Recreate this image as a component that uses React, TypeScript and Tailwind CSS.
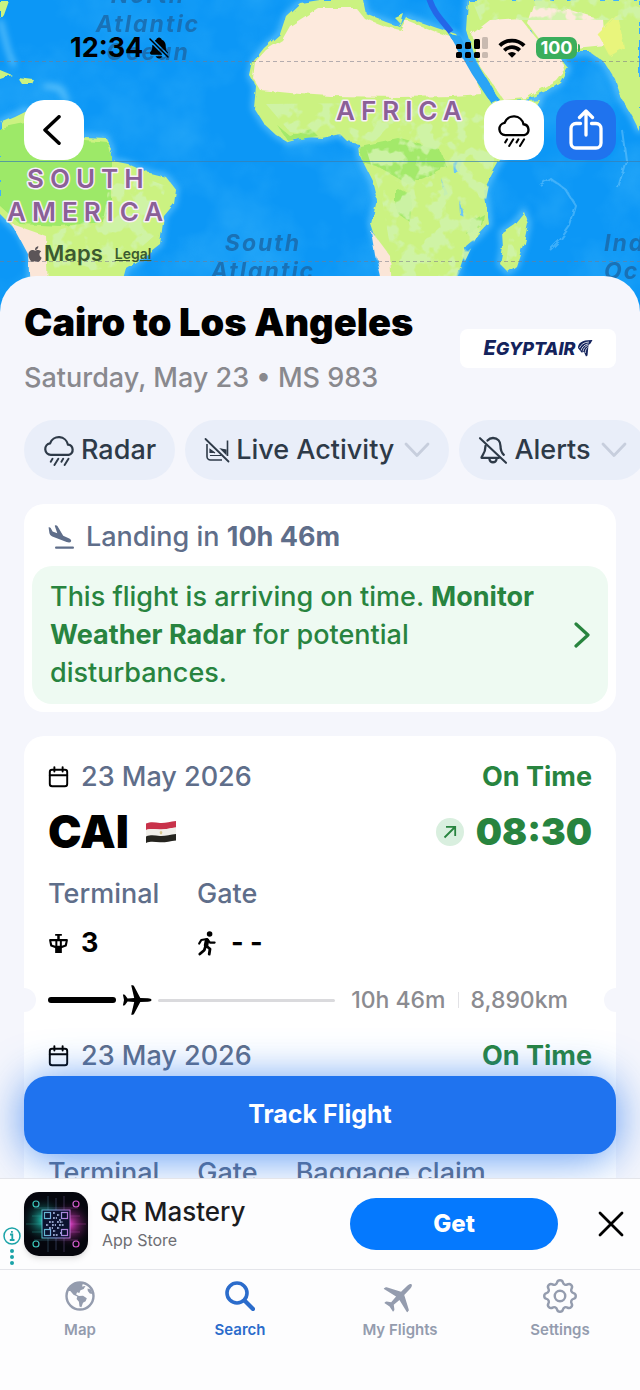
import type { FC, ReactNode } from "react";
import { FaApple } from "react-icons/fa";
import { IoNotificationsOff } from "react-icons/io5";
import { TbSettings } from "react-icons/tb";

interface IconProps {
  className?: string;
}

const RainIcon: FC<IconProps> = ({ className }) => (
  <svg
    viewBox="0 1 33 33"
    fill="none"
    stroke="currentColor"
    strokeWidth="2.3"
    strokeLinecap="round"
    className={className}
  >
    <path d="M8 22.500a6 6 0 0 1-.7-11.900 9.600 9.600 0 0 1 18.400 1.300 5.400 5.400 0 0 1 .8 10.600Z" />
    <path d="M9.800 26.500 8 29.500M15.800 26.500l-4 6.500M20.800 26.500l-1.800 3M26.300 26.500l-4 6.500" strokeWidth="2" />
  </svg>
);

const LiveActivityOffIcon: FC<IconProps> = ({ className }) => (
  <svg viewBox="0 0 26 26" fill="none" stroke="currentColor" className={className}>
    <path d="M3 7v12.500A3.500 3.500 0 0 0 6.500 23H18M23.500 3.500V19" strokeWidth="1.600" />
    <path d="M6 18.500h11M6 16v-3.500l5 3.500M17 12l5 1v4z" fill="currentColor" strokeWidth="1.200" />
    <path d="M1.500 2 24.500 24.500" strokeWidth="1.800" strokeLinecap="round" />
  </svg>
);

const BellOffIcon: FC<IconProps> = ({ className }) => (
  <svg
    viewBox="0 0 30 30"
    fill="none"
    stroke="currentColor"
    strokeWidth="2.300"
    strokeLinecap="round"
    strokeLinejoin="round"
    className={className}
  >
    <path d="M9.500 5.600C11 3.800 12.600 3 15 3c4.600 0 7.500 3.400 7.500 8 0 4.500 1.200 6.800 3.300 8.800M21 22.800H3.500C3.500 20.500 7.500 19 7.500 11" />
    <path d="M11.500 24.500a3.600 3.600 0 0 0 7 0" />
    <path d="M2 3.200 28 27.800" strokeWidth="2.100" />
  </svg>
);

const LandingIcon: FC<IconProps> = ({ className }) => (
  <svg viewBox="0 0 26 25" fill="currentColor" className={className}>
    <path d="M.6 2.600C.6 1.900 2.200 2.200 2.700 2.900L4.600 6.400 9.300 8.300 6.800 1C6.600.2 8.600 0 9.400 1.100L15.200 10.800 20.700 13.200C23 14.300 23.600 15.500 23 16.500 22.400 17.500 20.800 17.700 18.600 16.900L4.300 11.400C2.600 10.700 1.700 9.600 1.400 8.100Z" />
    <rect x="7" y="21.600" width="19" height="2.200" rx="1.100" />
  </svg>
);

const AirplaneIcon: FC<IconProps> = ({ className }) => (
  <svg viewBox="0 0 30 30" fill="currentColor" className={className}>
    <path d="M29.500 15c0 1-1.600 1.700-3.600 1.800l-7.600.2-6.200 11.800c-.3.600-.8.900-1.500.9H9.200l3-12.600-6.600-.5-2.400 3.200c-.3.400-.7.600-1.200.6H.9L2 15 .9 9.600H2c.5 0 .9.200 1.200.6l2.400 3.200 6.600-.5L9.200.3h1.400c.7 0 1.200.3 1.500.9L18.300 13l7.600.2c2 .1 3.600.8 3.600 1.800Z" />
  </svg>
);

const WalkIcon: FC<IconProps> = ({ className }) => (
  <svg
    viewBox="0 0 20 25"
    fill="none"
    stroke="currentColor"
    strokeLinecap="round"
    strokeLinejoin="round"
    className={className}
  >
    <circle cx="12.600" cy="3" r="2.800" fill="currentColor" stroke="none" />
    <path d="M10 9.500 9 14.500" strokeWidth="4.500" />
    <path d="M2.200 12.500 4.300 9 10 8l3 3.600h4.600" strokeWidth="2.200" />
    <path d="m9.500 15 3.500 3-.8 5.200M8.500 15.500l-1.300 3.700L2.800 23" strokeWidth="2.800" />
  </svg>
);

const CalendarIcon: FC<IconProps> = ({ className }) => (
  <svg
    viewBox="0 0 22 24"
    fill="none"
    stroke="currentColor"
    strokeWidth="2.100"
    strokeLinecap="round"
    className={className}
  >
    <rect x="1.500" y="4" width="19" height="18" rx="2.500" />
    <path d="M1.500 10h19M6.500 1.200V6M15.500 1.200V6" />
  </svg>
);

const TowerIcon: FC<IconProps> = ({ className }) => (
  <svg viewBox="0 0 22 22" fill="currentColor" className={className}>
    <path d="M7.500 1h7v1.800H12.300v3.400h-2.600V2.800H7.500zM7.500 14.500h7V21h-7z" />
    <path
      d="M2.500 6.300h17c1 0 1.500.6 1.300 1.500l-1 5.200c-.2.800-.7 1.200-1.500 1.400l-4.300 1.600H8l-4.300-1.600c-.8-.2-1.300-.6-1.500-1.400l-1-5.200c-.2-.9.300-1.500 1.300-1.500zm1 2.300.9 3.700 3.300 1V8.600zm6.300 0v4.700h2.600V8.600zm4.700 0v4.700l3.100-1 .9-3.700z"
      fillRule="evenodd"
    />
  </svg>
);

const EgyptFlag: FC<IconProps> = ({ className }) => (
  <svg viewBox="0 0 32 24" className={className}>
    <path d="M1 3.500c5-2 9-1 14-.6s10-1.400 16-1.900v6.600c-6 .6-11 2.200-16 1.900s-9-1.400-14 .6z" fill="#c8324a" />
    <path d="M1 10.100c5-2 9-.9 14-.6s10-1.300 16-1.900v6.400c-6 .6-11 2.200-16 1.900s-9-1.400-14 .6z" fill="#f1efea" />
    <path d="M1 16.500c5-2 9-.9 14-.6s10-1.300 16-1.900v6.400c-6 .6-11 2.200-16 1.900s-9-1.400-14 .6z" fill="#25241f" />
    <path d="m16 10.800 1.400 1.200-.5 2.200h-1.800l-.5-2.200z" fill="#d8c78f" />
  </svg>
);

const WorldMap: FC = () => (
  <svg
    viewBox="0 0 640 320"
    preserveAspectRatio="xMidYMin slice"
    className="absolute inset-x-0 top-0 h-80 w-full"
    fontFamily="Inter, sans-serif"
  >
    <defs>
      <filter id="coast" x="-5%" y="-5%" width="110%" height="110%">
        <feTurbulence type="fractalNoise" baseFrequency="0.09" numOctaves="2" seed="4" />
        <feDisplacementMap in="SourceGraphic" scale="6" />
      </filter>
      <filter id="shelf" x="-5%" y="-5%" width="110%" height="110%">
        <feGaussianBlur stdDeviation="3" />
      </filter>
      <filter id="depth">
        <feTurbulence type="fractalNoise" baseFrequency="0.014" numOctaves="4" seed="9" />
        <feColorMatrix values="0 0 0 0 0.2  0 0 0 0 0.72  0 0 0 0 1  1.8 0 0 0 -0.75" />
      </filter>
      <filter id="forest">
        <feTurbulence type="fractalNoise" baseFrequency="0.06" numOctaves="3" seed="2" />
        <feColorMatrix values="0 0 0 0 0.63  0 0 0 0 0.9  0 0 0 0 0.4  9 0 0 0 -4.4" />
        <feComposite in2="SourceAlpha" operator="in" />
      </filter>
      <path
        id="africa"
        d="M300 3 286 16 280 34 264 48 253 62 250 76 256 86 254 108 264 124 276 135 288 142 306 137 322 138 340 134 348 142 359 144 360 156 372 180 377 200 371 224 378 246 383 262 386 290H452L458 270 466 246 478 236 489 224 484 190 492 174 508 146 530 120 540 100 498 104 486 82 470 58 456 34 437 28 420 22 406 17 400 27 386 22 366 14 363 0H320Z"
      />
      <path
        id="arabia"
        d="M468 0 466 30 474 56 488 84 500 102 526 100 546 91 560 82 568 68 560 58 546 54 530 50 520 32 531 30 538 46 566 52 590 52 604 62 614 78 620 96 632 116 640 132V0Z"
      />
      <path
        id="america"
        d="M0 122 14 116 26 110 50 120 84 137 106 138 112 150 108 160 128 164 146 172 166 177 176 190 174 204 164 216 160 244 142 258 126 268 120 290H30L30 254 20 234 0 214Z"
      />
      <path id="madagascar" d="M524 212 528 224 524 242 516 266 508 272 500 264 503 248 502 232 514 224Z" />
    </defs>

    <rect width="640" height="320" fill="#0c97f6" />
    <rect width="640" height="320" filter="url(#depth)" opacity="0.25" />
    <g filter="url(#shelf)" fill="none" stroke="#8fdcff" strokeWidth="5" opacity="0.6">
      <use href="#africa" />
      <use href="#arabia" />
      <use href="#america" />
      <use href="#madagascar" />
      <path d="M0 20 8 50 14 66M44 86 60 88 68 102" />
    </g>
    <g fill="none" stroke="#8ad4ff" strokeWidth="2" opacity="0.4" filter="url(#coast)">
      <path d="M540 185 550 178 566 190 576 206 570 226 560 240 550 250M622 130 626 160 618 188" />
    </g>

    <g filter="url(#coast)" fill="#cbf281">
      <use href="#africa" />
      <use href="#arabia" />
      <use href="#america" />
      <use href="#madagascar" />
      <path d="M0 0H8L3 14 0 18ZM0 70 12 75 0 79ZM18 78 34 80 32 84 22 84ZM345 0H352L348 4ZM395 18 404 14 401 24Z" />
    </g>
    <g filter="url(#coast)">
      <path d="M0 128 30 122 84 140 108 142 112 160 112 200 104 222 60 226 20 224 0 206Z" fill="#9de967" />
      <path d="M360 146 398 138 440 150 446 166 424 178 408 184 394 176 376 166 362 162Z" fill="#a3e96b" />
      <path d="M396 188 412 196 410 222 396 212ZM470 222 484 214 482 226 466 234Z" fill="#a3e96b" />
      <path d="M276 124 290 136 312 130 318 136 288 141Z" fill="#a3e96b" />
      <path d="M318 8 290 26 282 40 266 50 255 62 253 78 260 90 300 94 330 96 400 97 452 96 482 94 470 62 454 38 436 32 406 20 400 30 384 26 364 18 356 8Z" fill="#fdeadd" />
      <path d="M472 34 490 20 520 18 546 50 562 60 564 70 556 80 526 98 504 100 480 66ZM534 6 570 10 604 20 606 46 566 50 540 40 528 24Z" fill="#fdeadd" />
      <path d="M12 224 46 236 48 290H30L28 254Z" fill="#fbe6d8" />
      <path d="M372 232 390 256 392 290H384L376 256Z" fill="#fbe6d8" />
      <path d="M598 34 618 14 624 48 610 56Z" fill="#e9f57c" />
      <path d="M452 162 462 160 460 172 453 172ZM441 178 448 194 444 196ZM460 200 465 218 461 216Z" fill="#6cc6f5" />
      <path d="M449 34 460 36 476 62 500 100 492 104 472 74Z" fill="#2ba4f5" />
    </g>
    <g filter="url(#forest)" opacity="0.9">
      <path d="M266 104 470 102 500 130 480 230 456 280 396 280 382 200 364 142 290 132Z" />
      <path d="M112 166 166 186 154 236 120 266 54 276 52 232 104 216Z" />
      <path d="M510 230 522 220 516 260 506 264ZM472 0H640V20H480Z" />
    </g>

    <path d="M0 161.500H640" stroke="#3a7fb0" strokeWidth="1.200" opacity="0.7" />
    <path d="M0 61.500H640M0 261.500H640" stroke="#7a7a88" strokeWidth="1" strokeDasharray="4 3" opacity="0.55" />
    <path d="M429-2C434 14 442 20 451 32" fill="none" stroke="#2467e8" strokeWidth="6" />

    <g fill="#1a6aab" fontSize="23" fontStyle="italic" fontWeight="700" letterSpacing="2" opacity="0.85" textAnchor="middle">
      <text x="148" y="3">North</text>
      <text x="148" y="32">Atlantic</text>
      <text x="148" y="60">Ocean</text>
      <text x="263" y="251">South</text>
      <text x="263" y="279">Atlantic</text>
      <g textAnchor="start">
        <text x="604" y="251">Indian</text>
        <text x="604" y="279">Ocean</text>
      </g>
    </g>
    <g
      fill="#8b6097"
      stroke="#f8eefb"
      strokeWidth="3"
      strokeLinejoin="round"
      paintOrder="stroke"
      fontSize="26"
      fontWeight="600"
      letterSpacing="6"
    >
      <text x="27" y="188">SOUTH</text>
      <text x="7" y="221">AMERICA</text>
      <text x="336" y="120">AFRICA</text>
    </g>
  </svg>
);

const StatusBar: FC = () => (
  <div className="flex h-8 items-center justify-between pl-[70px] pr-[60px]">
    <div className="flex items-center gap-1 text-[27px] font-bold">
      <span>12:34</span>
      <IoNotificationsOff className="size-6" />
    </div>
    <div className="flex items-center gap-2.5">
      <svg viewBox="0 0 32 22" className="h-[22px] w-8">
        <g fill="#000">
          <rect x="0" y="7" width="6" height="5" rx="1.500" />
          <rect x="0" y="15" width="6" height="6" rx="1.500" />
          <rect x="9" y="5" width="6" height="7" rx="1.500" />
          <rect x="9" y="15" width="6" height="6" rx="1.500" />
          <rect x="18" y="2" width="6" height="10" rx="1.500" />
          <rect x="18" y="15" width="6" height="6" rx="1.500" />
        </g>
        <g fill="#000" opacity="0.2">
          <rect x="26" y="0" width="6" height="12" rx="1.500" />
          <rect x="26" y="15" width="6" height="6" rx="1.500" />
        </g>
      </svg>
      <svg viewBox="0 0 28 20" fill="none" stroke="#000" strokeWidth="3.800" className="h-5 w-7">
        <path d="M1.800 7.600a17.300 17.300 0 0 1 24.400 0M6.300 12.400a10.900 10.900 0 0 1 15.400 0" />
        <path d="M14 19.800 9.900 15.700a5.800 5.800 0 0 1 8.200 0Z" fill="#000" stroke="none" />
      </svg>
      <div className="flex items-center gap-px">
        <span className="flex h-[22px] w-[41px] items-center justify-center rounded-[7px] bg-[#3aae5c] text-lg font-bold text-white">
          100
        </span>
        <span className="h-2 w-0.5 rounded-r bg-[#3aae5c]" />
      </div>
    </div>
  </div>
);

const MapHeader: FC = () => (
  <header className="relative h-[276px] shrink-0">
    <WorldMap />
    <div className="relative flex h-full flex-col pt-8">
      <StatusBar />
      <div className="mt-9 flex items-center gap-3 px-6">
        <button
          aria-label="Back"
          className="flex size-[60px] items-center justify-center rounded-[20px] bg-white"
        >
          <svg viewBox="0 0 22 30" fill="none" stroke="#000" strokeWidth="3.500" strokeLinecap="round" strokeLinejoin="round" className="h-[30px] w-[22px]">
            <path d="M16 1.800 2 15l14 13.200" />
          </svg>
        </button>
        <div className="flex-grow" />
        <button
          aria-label="Weather radar"
          className="flex size-[60px] items-center justify-center rounded-[20px] bg-white"
        >
          <RainIcon className="size-[34px]" />
        </button>
        <button
          aria-label="Share"
          className="flex size-[60px] items-center justify-center rounded-[20px] bg-[#1f73ee] text-white"
        >
          <svg viewBox="0 0 34 42" fill="none" stroke="currentColor" strokeWidth="3.300" strokeLinecap="round" strokeLinejoin="round" className="h-[42px] w-[34px]">
            <path d="M11.500 14.500H7a5 5 0 0 0-5 5V34a5 5 0 0 0 5 5h20a5 5 0 0 0 5-5V19.500a5 5 0 0 0-5-5h-4.500" />
            <path d="M17 26V2.500M10.500 8.500 17 2l6.500 6.500" />
          </svg>
        </button>
      </div>
      <div className="flex-grow" />
      <div className="flex items-center gap-3 px-[26px] pb-1.5 text-[#3c5a30]">
        <span className="flex items-center text-[22px] font-semibold">
          <FaApple className="size-[18px] text-[#5c5558]" />
          Maps
        </span>
        <a href="#legal" className="text-sm font-semibold underline">
          Legal
        </a>
      </div>
    </div>
  </header>
);

const EgyptairLogo: FC = () => (
  <div className="flex h-[39px] w-[156px] items-center justify-center gap-0.5 rounded-lg bg-white text-[#14235c]">
    <span className="text-lg font-extrabold italic">
      <span className="text-xl">E</span>GYPTAIR
    </span>
    <svg viewBox="0 0 15 18" className="h-[18px] w-[15px]">
      <path
        d="M0 9C0 4 4 .8 14.500 1L12.500 4.500 10.500 6 9.500 16.500 8 17.500 6 13 3.500 13.500Z"
        fill="currentColor"
      />
      <path
        d="M1.500 9C3 5.500 6 3.200 11 3M3 11.500C4 8 6.500 5.500 10.500 4.800M5 12.500C5.500 9.500 7 7.500 9.800 6.500M7.200 14C7.400 11.500 8 9.500 9.600 8.500"
        fill="none"
        stroke="#fff"
        strokeWidth="0.800"
      />
    </svg>
  </div>
);

const TitleBlock: FC = () => (
  <div className="flex items-center justify-between px-6">
    <div>
      <h1 className="text-[38px] font-black leading-11">Cairo to Los Angeles</h1>
      <p className="mt-4 text-[27px] font-medium leading-9 text-[#89898e]">
        Saturday, May 23 • MS 983
      </p>
    </div>
    <EgyptairLogo />
  </div>
);

interface ChipProps {
  icon: ReactNode;
  label: string;
  menu?: boolean;
}

const Chip: FC<ChipProps> = ({ icon, label, menu }) => (
  <button className="flex h-[60px] shrink-0 items-center gap-1.5 rounded-full bg-[#e9eef9] px-[19px] text-[27px] font-medium text-[#2e3a48]">
    {icon}
    {label}
    {menu && (
      <svg viewBox="0 0 26 16" fill="none" stroke="#c7cedd" strokeWidth="2.800" strokeLinecap="round" strokeLinejoin="round" className="ml-1 h-4 w-[26px]">
        <path d="M2 2l11 11.500L24 2" />
      </svg>
    )}
  </button>
);

const LandingCard: FC = () => (
  <section className="mx-6 rounded-[20px] bg-white p-2">
    <h2 className="flex h-[54px] items-center gap-3 px-4 pb-1 text-[27px] font-medium text-[#5f6e8a]">
      <LandingIcon className="h-[25px] w-[26px]" />
      <span>
        Landing in <b className="font-bold">10h 46m</b>
      </span>
    </h2>
    <button className="flex w-full items-center justify-between rounded-[20px] bg-[#eefaf2] px-[18px] py-3 text-left text-[27px] font-medium leading-[38px] text-[#28843f]">
      <span className="max-w-[500px]">
        This flight is arriving on time. <b className="font-bold">Monitor Weather Radar</b> for
        potential disturbances.
      </span>
      <svg viewBox="0 0 16 26" fill="none" stroke="currentColor" strokeWidth="3.200" strokeLinecap="round" strokeLinejoin="round" className="h-[26px] w-4">
        <path d="M2 2l12 11L2 24" />
      </svg>
    </button>
  </section>
);

interface LegProps {
  date: string;
  status: string;
  children: ReactNode;
}

const Leg: FC<LegProps> = ({ date, status, children }) => (
  <section className="px-6">
    <div className="flex h-10 items-center justify-between text-[27px]">
      <span className="flex items-center gap-3 font-medium text-[#5f6e8a]">
        <CalendarIcon className="h-[22px] w-[21px] text-black" />
        {date}
      </span>
      <span className="font-bold text-[#28843f]">{status}</span>
    </div>
    {children}
  </section>
);

const FlightProgress: FC = () => (
  <div className="relative flex h-9 items-center px-6 text-[23px] font-medium text-[#8b8b90]">
    <span className="absolute -left-3 top-1.5 size-6 rounded-full bg-[#f5f6fc]" />
    <span className="absolute -right-3 top-1.5 size-6 rounded-full bg-[#f5f6fc]" />
    <span className="h-1.5 w-[68px] rounded-full bg-black" />
    <AirplaneIcon className="mx-1.5 size-[30px] text-black" />
    <span className="mr-4 h-[3px] flex-grow rounded-full bg-[#dadadd]" />
    <span>10h 46m</span>
    <span className="mx-3 h-4 w-px bg-[#e2e2e6]" />
    <span className="pr-6">8,890km</span>
  </div>
);

const FlightCard: FC = () => (
  <div className="mx-6 rounded-[20px] bg-white pt-[21px]">
    <Leg date="23 May 2026" status="On Time">
      <div className="flex h-[70px] items-center justify-between">
        <h3 className="flex items-center gap-4 text-[45px] font-black">
          CAI
          <EgyptFlag className="h-6 w-8" />
        </h3>
        <span className="flex items-center gap-3 text-[37px] font-black text-[#28843f]">
          <span className="flex size-7 items-center justify-center rounded-full bg-[#d9efdf]">
            <svg viewBox="0 0 14 14" fill="none" stroke="currentColor" strokeWidth="1.800" className="size-3.5">
              <path d="M1.500 12.500 12 2M3 1.800h9.200V11" />
            </svg>
          </span>
          08:30
        </span>
      </div>
      <div className="grid grid-cols-[149px_1fr] text-[27px] font-medium text-[#5f6e8a]">
        <span className="leading-[54px]">Terminal</span>
        <span className="leading-[54px]">Gate</span>
        <span className="flex h-11 items-center gap-3 font-bold text-black">
          <TowerIcon className="size-[21px]" />3
        </span>
        <span className="flex h-11 items-center gap-3.5 font-bold text-black">
          <WalkIcon className="h-[25px] w-5" />- -
        </span>
      </div>
    </Leg>
    <div className="h-[17px]" />
    <FlightProgress />
    <div className="h-[18px]" />
    <Leg date="23 May 2026" status="On Time">
      <div className="h-[70px]" />
      <div className="flex gap-[38px] text-[27px] font-medium leading-[54px] text-[#5f6e8a]">
        <span>Terminal</span>
        <span>Gate</span>
        <span>Baggage claim</span>
      </div>
    </Leg>
  </div>
);

const QrAppIcon: FC<IconProps> = ({ className }) => (
  <svg viewBox="0 0 64 64" className={className}>
    <defs>
      <radialGradient id="teal">
        <stop offset="0" stopColor="#1fd6c2" />
        <stop offset="1" stopColor="#05060d" stopOpacity="0" />
      </radialGradient>
      <radialGradient id="pink">
        <stop offset="0" stopColor="#f13fd0" />
        <stop offset="1" stopColor="#05060d" stopOpacity="0" />
      </radialGradient>
      <linearGradient id="neon" gradientUnits="userSpaceOnUse" x1="8" y1="0" x2="56" y2="0">
        <stop offset="0" stopColor="#2fc9b4" />
        <stop offset="0.5" stopColor="#8fa6e8" />
        <stop offset="1" stopColor="#e04bc4" />
      </linearGradient>
    </defs>
    <rect width="64" height="64" fill="#05060d" />
    <circle cx="20" cy="28" r="24" fill="url(#teal)" />
    <circle cx="45" cy="32" r="24" fill="url(#pink)" />
    <path d="M2 32h60M8 24h48M8 40h48M10 48h44M10 16h44M24 4v56M32 6v52M40 4v56" stroke="url(#neon)" strokeWidth="0.500" opacity="0.600" />
    <rect x="18" y="18" width="28" height="28" fill="#0b1230" stroke="url(#neon)" />
    <g fill="none" stroke="url(#neon)" strokeWidth="1.200">
      <rect x="20.500" y="20.500" width="6" height="6" />
      <rect x="37.500" y="20.500" width="6" height="6" />
      <rect x="20.500" y="37.500" width="6" height="6" />
      <rect x="37.500" y="37.500" width="6" height="6" />
      <circle cx="12" cy="12" r="3" />
      <circle cx="52" cy="12" r="3" />
      <circle cx="12" cy="52" r="3" />
      <circle cx="52" cy="52" r="3" />
    </g>
    <path d="M29 21h2m2 2h3m-7 3h4m2 2h2m-12 2h5m3 0h6m-17 3h3m3 0h4m3 0h5m-15 3h4m4 0h3m-7 3h3m4 2h1m-8 2h5" stroke="#b9c9f2" strokeWidth="1.600" strokeDasharray="1.800 1" />
  </svg>
);

const AdBanner: FC = () => (
  <aside className="flex h-[92px] shrink-0 items-center border-y border-[#e4e5ea] bg-[#fdfdfe] pl-1 pr-4">
    <div className="flex w-4 flex-col items-center gap-1 self-end pb-1 text-[#1ba3a8]">
      <svg viewBox="0 0 18 18" fill="none" stroke="currentColor" strokeWidth="1.500" className="size-[18px]">
        <circle cx="9" cy="9" r="8" />
        <path d="M7 7.500h2.300V13M6.800 13h4.700M8 4.800h1.800" strokeWidth="1.800" />
      </svg>
      <svg viewBox="0 0 4 16" fill="currentColor" className="h-4 w-1">
        <circle cx="2" cy="2" r="2" />
        <circle cx="2" cy="8" r="2" />
        <circle cx="2" cy="14" r="2" />
      </svg>
    </div>
    <QrAppIcon className="ml-1 size-16 rounded-[15px] shadow-md" />
    <div className="ml-3 flex-grow">
      <p className="text-[26px] font-medium leading-8 text-[#1c1c1e]">QR Mastery</p>
      <p className="pl-0.5 text-base leading-6 text-[#6e6e73]">App Store</p>
    </div>
    <button className="h-[52px] w-[208px] rounded-full bg-[#0579fe] text-2xl font-extrabold text-white">
      Get
    </button>
    <button aria-label="Close ad" className="ml-10">
      <svg viewBox="0 0 26 26" fill="none" stroke="#000" strokeWidth="2.800" strokeLinecap="round" className="size-[26px]">
        <path d="M2 2l22 22M24 2 2 24" />
      </svg>
    </button>
  </aside>
);

const GlobeIcon: FC<IconProps> = ({ className }) => (
  <svg viewBox="0 0 30 30" className={className}>
    <circle cx="15" cy="15" r="13.500" fill="none" stroke="currentColor" strokeWidth="2.400" />
    <path
      fill="currentColor"
      d="M3 10C6 3.500 12 1 18 2.200l-1 3.300 3.500-.6-1.800 3-3.200 1.300-1.200 2.700-2.200-.7-1 2.300 2.800 1.400 4.100-.2 3.800 2.600-1.200 3-2.600 1.500-1.600 4.400-1.900-.7-.6-4.700-2.300-2.800.7-2.600-3.800-1.600-3.200-3.900ZM22.500 7.500l3.500 1 1.500 4.500-2.700-.6-2-2.500z"
    />
  </svg>
);

const SearchIcon: FC<IconProps> = ({ className }) => (
  <svg viewBox="0 0 30 30" fill="none" stroke="currentColor" strokeLinecap="round" className={className}>
    <circle cx="12" cy="12" r="10" strokeWidth="3.600" />
    <path d="m19.500 19.500 8.500 8.500" strokeWidth="4.200" />
  </svg>
);

const TabBar: FC = () => {
  const tabs = [
    { label: "Map", icon: <GlobeIcon className="size-[30px]" />, active: false },
    { label: "Search", icon: <SearchIcon className="size-[30px]" />, active: true },
    { label: "My Flights", icon: <AirplaneIcon className="size-[34px] -rotate-45" />, active: false },
    { label: "Settings", icon: <TbSettings className="size-[42px] stroke-[1.4]" />, active: false },
  ];

  return (
    <nav className="grid h-[120px] shrink-0 grid-cols-4 bg-[#fdfdfe]">
      {tabs.map((tab) => (
        <a
          key={tab.label}
          href="#tab"
          className={
            tab.active
              ? "flex flex-col items-center pt-2 text-[#2b6ccb]"
              : "flex flex-col items-center pt-2 text-[#949cae]"
          }
        >
          <span className="flex h-9 items-center">{tab.icon}</span>
          <span className="mt-1 text-[15px] font-semibold leading-6">{tab.label}</span>
        </a>
      ))}
    </nav>
  );
};

export default function App() {
  return (
    <div className="flex h-dvh flex-col overflow-hidden bg-[#f5f6fc] font-['Inter',sans-serif] text-black">
      <div className="relative flex min-h-0 flex-1 flex-col overflow-hidden">
        <MapHeader />
        <main className="relative flex shrink-0 flex-col gap-6 rounded-t-[36px] bg-[#f5f6fc] pt-6">
          <TitleBlock />
          <div className="flex gap-2.5 overflow-hidden pl-6">
            <Chip icon={<RainIcon className="size-8" />} label="Radar" />
            <Chip icon={<LiveActivityOffIcon className="size-[26px]" />} label="Live Activity" menu />
            <Chip icon={<BellOffIcon className="size-[30px]" />} label="Alerts" menu />
          </div>
          <LandingCard />
          <FlightCard />
        </main>
        <div className="absolute inset-x-6 bottom-6">
          <button className="h-[78px] w-full rounded-3xl bg-[#1f73ef] text-[25px] font-bold text-white shadow-[0_4px_44px_rgba(31,115,239,0.75)]">
            Track Flight
          </button>
        </div>
      </div>
      <AdBanner />
      <TabBar />
    </div>
  );
}
